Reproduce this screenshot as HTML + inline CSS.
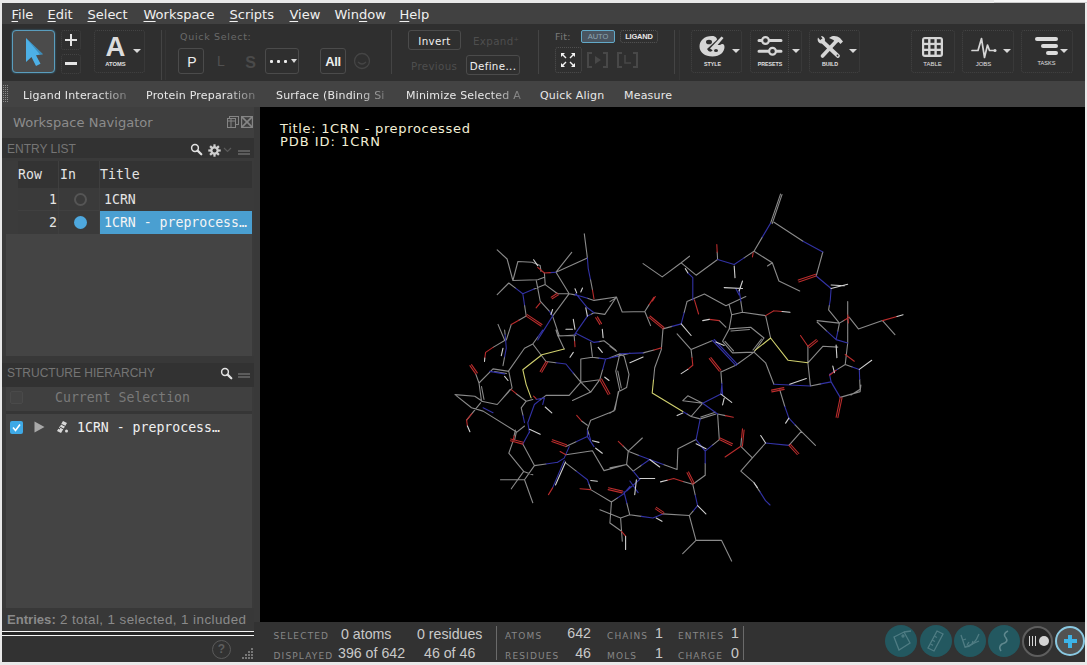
<!DOCTYPE html>
<html lang="en">
<head>
<meta charset="utf-8">
<title>Maestro</title>
<style>
*{box-sizing:border-box;margin:0;padding:0}
html,body{width:1087px;height:665px;overflow:hidden;background:#e9e9e9}
body{position:relative;font-family:"DejaVu Sans","Liberation Sans",sans-serif;color:#e6e6e6;font-size:13px}
.abs{position:absolute}
#win{position:absolute;left:2px;top:3px;width:1083px;height:659px;background:#303030;overflow:hidden}
#pg{position:absolute;left:-2px;top:-3px;width:1087px;height:665px}
#menubar{left:2px;top:3px;width:1083px;height:21px;background:#414141}
#menubar span{position:absolute;top:3px;margin-left:.5px;font-size:13px;line-height:17px;color:#f0f0f0;white-space:nowrap}
#menubar u{text-decoration:underline;text-underline-offset:2px}
#toolbar{left:2px;top:24px;width:1083px;height:57px;background:#2f2f2f}
#favbar{left:2px;top:81px;width:1083px;height:26px;background:#434343}
#favbar span{position:absolute;top:7.5px;font-size:11px;line-height:14px;color:#e8e8e8;white-space:nowrap;letter-spacing:.2px}
.tbtn{position:absolute;border:1px dotted #444;border-radius:3px}
.lbl{position:absolute;font-family:"Liberation Sans",sans-serif;font-size:6px;color:#e0e0e0;text-align:center;letter-spacing:0;white-space:nowrap}
.arr{position:absolute;width:0;height:0;border-left:4px solid transparent;border-right:4px solid transparent;border-top:4px solid #d8d8d8}
.sep{position:absolute;width:1px;background:#444;}
#left{left:2px;top:107px;width:252px;height:555px;background:linear-gradient(#3a3a3a,#3a3a3a) 0 0/252px 524px no-repeat,#323232}
#leftgap{left:254px;top:107px;width:6px;height:515px;background:#393939}
#ws{left:260px;top:107px;width:825px;height:515px;background:#000}
#status{left:254px;top:622px;width:831px;height:40px;background:#323232}
.mono{font-family:"DejaVu Sans Mono","Liberation Mono",monospace;font-size:13.2px !important}
.lib{font-family:"Liberation Sans",sans-serif}
.stl{position:absolute;font-size:9px;line-height:12px;color:#878787;letter-spacing:1.15px;white-space:nowrap}
.stv{position:absolute;font-family:"Liberation Sans",sans-serif;font-size:14.2px;line-height:17px;color:#c9c9c9;white-space:nowrap}
.rb{position:absolute;top:625px;width:32px;height:32px;border-radius:50%;background:#235860}
</style>
</head>
<body>
<div class="abs" style="left:994px;top:0;width:93px;height:3px;background:#f7f7f7;border-bottom:1px solid #cdcdcd"></div>
<div id="menubar" class="abs">
<span style="left:9px"><u>F</u>ile</span>
<span style="left:45px"><u>E</u>dit</span>
<span style="left:85px"><u>S</u>elect</span>
<span style="left:141px"><u>W</u>orkspace</span>
<span style="left:227px"><u>S</u>cripts</span>
<span style="left:287px"><u>V</u>iew</span>
<span style="left:332px">Win<u>d</u>ow</span>
<span style="left:397px"><u>H</u>elp</span>
</div>
<div id="toolbar" class="abs"></div>
<!-- toolbar items (page coords) -->
<div class="abs" style="left:12px;top:30px;width:43px;height:43px;border:1px solid #5a9dbd;border-radius:4px;background:#4b4b4b;box-shadow:0 0 2px #3c7fa0"></div>
<svg class="abs" style="left:12px;top:30px" width="43" height="43" viewBox="0 0 43 43"><path d="M14 8 L14 32 L19.5 27 L24 36 L28.5 33.8 L24 25.2 L31 24.2 Z" fill="#4db0e6"/><path d="M14 8 L31 24.2 L28 24.6 Z" fill="#2f6f95" opacity=".55"/></svg>
<div class="tbtn" style="left:61px;top:30px;width:20px;height:20px"></div>
<div class="abs" style="left:65px;top:39px;width:12px;height:2px;background:#e4e4e4"></div>
<div class="abs" style="left:70px;top:34px;width:2px;height:12px;background:#e4e4e4"></div>
<div class="tbtn" style="left:61px;top:54px;width:20px;height:20px"></div>
<div class="abs" style="left:65px;top:62px;width:12px;height:3px;background:#e4e4e4"></div>
<div class="tbtn" style="left:94px;top:30px;width:51px;height:43px"></div>
<div class="abs lib" style="left:103.5px;top:31.5px;width:24px;height:30px;font-size:27.5px;line-height:30px;font-weight:bold;color:#dcdcdc;text-align:center">A</div>
<div class="arr" style="left:133px;top:49px"></div>
<div class="lbl" style="left:100px;top:60px;width:31px;font-weight:bold;font-size:5.8px;line-height:8px">ATOMS</div>
<div class="sep" style="left:161px;top:30px;height:50px"></div>
<div class="sep" style="left:165px;top:30px;height:50px;background:#363636"></div>
<div class="abs" style="left:180px;top:30px;font-size:9.5px;line-height:13px;color:#6a6a6a;letter-spacing:.7px;white-space:nowrap">Quick Select:</div>
<div class="tbtn" style="left:178px;top:48px;width:26px;height:26px;border:1px solid #4b4b4b"></div>
<div class="abs lib" style="left:179px;top:49px;width:26px;height:26px;line-height:27px;font-size:14px;color:#ededed;text-align:center">P</div>
<div class="abs lib" style="left:208px;top:48px;width:26px;height:26px;line-height:27px;font-size:14px;color:#515151;text-align:center">L</div>
<div class="abs lib" style="left:237.5px;top:48.5px;width:26px;height:26px;line-height:27px;font-size:16px;font-weight:bold;color:#4a4a4a;text-align:center">S</div>
<div class="tbtn" style="left:265px;top:48px;width:34px;height:26px;border:1px solid #4b4b4b"></div>
<div class="abs" style="left:270px;top:60px;width:3px;height:3px;background:#ececec;border-radius:1px"></div>
<div class="abs" style="left:277px;top:60px;width:3px;height:3px;background:#ececec;border-radius:1px"></div>
<div class="abs" style="left:284px;top:60px;width:3px;height:3px;background:#ececec;border-radius:1px"></div>
<div class="arr" style="left:291px;top:59px;border-left-width:3.5px;border-right-width:3.5px"></div>
<div class="tbtn" style="left:320px;top:48px;width:26px;height:26px;border:1px solid #4b4b4b"></div>
<div class="abs lib" style="left:320px;top:48px;width:26px;height:26px;line-height:27px;font-size:13px;font-weight:bold;color:#ededed;text-align:center;letter-spacing:-.3px">All</div>
<svg class="abs" style="left:352px;top:51px" width="20" height="20" viewBox="0 0 20 20"><circle cx="10" cy="10" r="7.5" fill="none" stroke="#454545" stroke-width="1.3"/><path d="M6 11 Q10 15 14 11" fill="none" stroke="#454545" stroke-width="1.2"/></svg>
<div class="sep" style="left:391px;top:30px;height:44px"></div>
<div class="tbtn" style="left:408px;top:30px;width:53px;height:20px;border:1px solid #4b4b4b"></div>
<div class="abs" style="left:408px;top:30px;width:53px;height:20px;line-height:23.5px;font-size:10.3px;color:#f0f0f0;text-align:center;letter-spacing:.35px">Invert</div>
<div class="abs" style="left:473px;top:30px;height:20px;line-height:23.5px;font-size:10.3px;color:#4e4e4e;letter-spacing:.35px;white-space:nowrap">Expand&#x207A;</div>
<div class="abs" style="left:411px;top:55px;height:20px;line-height:23.5px;font-size:10.3px;color:#4e4e4e;letter-spacing:.35px;white-space:nowrap">Previous</div>
<div class="tbtn" style="left:466px;top:55px;width:54px;height:20px;border:1px solid #4b4b4b"></div>
<div class="abs" style="left:466px;top:55px;width:54px;height:20px;line-height:23.5px;font-size:10.3px;color:#f0f0f0;text-align:center;letter-spacing:.35px;white-space:nowrap">Define...</div>
<div class="sep" style="left:538px;top:30px;height:44px"></div>
<div class="abs" style="left:555px;top:30px;font-size:9.5px;line-height:13px;color:#7a7a7a;letter-spacing:.4px;white-space:nowrap">Fit:</div>
<div class="abs" style="left:581px;top:30px;width:34px;height:13px;border:1px solid #62a9c8;border-radius:2px;background:#4a5560"></div>
<div class="abs lib" style="left:581px;top:30px;width:34px;height:13px;line-height:14px;font-size:7.5px;color:#8fa6b4;text-align:center">AUTO</div>
<div class="tbtn" style="left:620px;top:30px;width:38px;height:13px;border-color:#585858"></div>
<div class="abs lib" style="left:620px;top:30px;width:38px;height:13px;line-height:14px;font-size:7.5px;color:#e6e6e6;text-align:center;font-weight:bold;letter-spacing:-.2px">LIGAND</div>
<div class="tbtn" style="left:555px;top:47px;width:27px;height:26px;border-color:#505050"></div>
<svg class="abs" style="left:560px;top:52px" width="16" height="16" viewBox="0 0 16 16" fill="#f4f4f4" stroke="#f4f4f4" stroke-width="1.4"><path d="M2 2 L6 6 M14 2 L10 6 M2 14 L6 10 M14 14 L10 10" fill="none"/><path d="M1 1 L5 1 L1 5 Z M15 1 L11 1 L15 5 Z M1 15 L5 15 L1 11 Z M15 15 L11 15 L15 11 Z" stroke="none"/></svg>
<svg class="abs" style="left:587px;top:52px" width="21" height="16" viewBox="0 0 21 16" fill="none" stroke="#484848" stroke-width="2"><path d="M5 1 H1 V15 H5 M16 1 H20 V15 H16"/><path d="M8 4 L14 8 L8 12 Z" fill="#484848" stroke="none"/></svg>
<svg class="abs" style="left:617px;top:52px" width="21" height="16" viewBox="0 0 21 16" fill="none" stroke="#484848" stroke-width="2"><path d="M5 1 H1 V15 H5 M16 1 H20 V15 H16"/><path d="M8 3 V11 H14" stroke-width="1.5"/></svg>
<div class="sep" style="left:674px;top:30px;height:44px"></div>
<div class="sep" style="left:679px;top:30px;height:50px;background:#363636"></div>
<!-- STYLE -->
<div class="tbtn" style="left:691px;top:30px;width:51px;height:43px"></div>
<svg class="abs" style="left:699px;top:35px" width="27" height="22" viewBox="0 0 27 22"><path d="M13 1 C5 1 0.5 6 0.5 11.5 C0.5 17.5 6 21.5 13.5 21.5 C21 21.5 25.5 17 25.5 12 C25.5 9.5 24 8.5 22 9.5 C19 11 16 9.5 17.5 6.5 C19 3.5 17 1 13 1 Z" fill="#d6d6d6"/><ellipse cx="10" cy="7" rx="3" ry="2.3" fill="#2f2f2f"/><path d="M8 14 L21 2 L23 3.5 L13 16 Q10 18 8 14 Z" fill="#2f2f2f"/><path d="M11 13.5 L22.5 1.5 L24.5 3 L14 15.5 Z" fill="#d6d6d6"/><ellipse cx="17" cy="15.5" rx="2" ry="1.6" fill="#2f2f2f"/></svg>
<div class="arr" style="left:732px;top:49px"></div>
<div class="lbl" style="left:697px;top:60px;width:31px;font-weight:bold;font-size:5.3px;line-height:8px">STYLE</div>
<!-- PRESETS -->
<div class="tbtn" style="left:750px;top:30px;width:52px;height:43px"></div>
<div class="abs" style="left:788px;top:31px;width:0;height:41px;border-left:1px dotted #4a4a4a"></div>
<svg class="abs" style="left:757px;top:35px" width="26" height="22" viewBox="0 0 26 22" fill="none" stroke="#d6d6d6"><path d="M2 5.5 H24 M2 16.3 H24" stroke-width="3" stroke-linecap="round"/><circle cx="8.5" cy="5.5" r="3.4" fill="#2f2f2f" stroke-width="2.2"/><circle cx="15.5" cy="16.3" r="3.4" fill="#2f2f2f" stroke-width="2.2"/></svg>
<div class="arr" style="left:792px;top:49px"></div>
<div class="lbl" style="left:754px;top:60px;width:32px;font-weight:bold;font-size:5.3px;line-height:8px">PRESETS</div>
<!-- BUILD -->
<div class="tbtn" style="left:809px;top:30px;width:51px;height:43px"></div>
<svg class="abs" style="left:816px;top:35px" width="29" height="24" viewBox="0 0 29 24"><g stroke="#d6d6d6" stroke-linecap="round" fill="none"><path d="M6 6 L22 21" stroke-width="3.8"/><path d="M20 6.5 L6.5 21" stroke-width="3.6"/></g><path d="M2 2.5 C1 5 2 8 5 8.5 L8 8 L9 5 C9 2.5 7 1 5 1 L6.5 4 L4.5 5.5 Z" fill="#d6d6d6"/><path d="M13 3 C16 0 21 0.5 24 3 L27 6.5 L24.5 9 L22.5 7 L20 8 L17.5 5 Z" fill="#d6d6d6"/><circle cx="21.5" cy="20.5" r=".9" fill="#2f2f2f"/></svg>
<div class="arr" style="left:849px;top:49px"></div>
<div class="lbl" style="left:814px;top:60px;width:32px;font-weight:bold;font-size:5.3px;line-height:8px">BUILD</div>
<!-- TABLE -->
<div class="tbtn" style="left:911px;top:30px;width:44px;height:43px"></div>
<svg class="abs" style="left:921px;top:36px" width="23" height="22" viewBox="0 0 23 22"><rect x="1" y="1" width="21" height="20" rx="3" fill="#d6d6d6"/><g fill="#2f2f2f"><rect x="3.2" y="3.2" width="3.9" height="3.6"/><rect x="9.5" y="3.2" width="3.9" height="3.6"/><rect x="15.8" y="3.2" width="3.9" height="3.6"/><rect x="3.2" y="9.1" width="3.9" height="3.6"/><rect x="9.5" y="9.1" width="3.9" height="3.6"/><rect x="15.8" y="9.1" width="3.9" height="3.6"/><rect x="3.2" y="15.0" width="3.9" height="3.6"/><rect x="9.5" y="15.0" width="3.9" height="3.6"/><rect x="15.8" y="15.0" width="3.9" height="3.6"/></g></svg>
<div class="lbl" style="left:916px;top:60px;width:33px;font-size:6px;line-height:8px">TABLE</div>
<!-- JOBS -->
<div class="tbtn" style="left:962px;top:30px;width:52px;height:43px"></div>
<svg class="abs" style="left:970.5px;top:37px" width="27" height="22" viewBox="0 0 27 22" fill="none" stroke="#d6d6d6" stroke-width="1.7" stroke-linejoin="round" stroke-linecap="round"><path d="M1 13.5 H7 L10.5 1.5 L13.5 20.5 L16.5 8 L18.5 13.5 H23.5"/><circle cx="24" cy="13.5" r="1.5" fill="#d6d6d6" stroke="none"/></svg>
<div class="arr" style="left:1003px;top:49px"></div>
<div class="lbl" style="left:967px;top:60px;width:33px;font-size:6px;line-height:8px">JOBS</div>
<!-- TASKS -->
<div class="tbtn" style="left:1021px;top:30px;width:52px;height:43px"></div>
<div class="abs" style="left:1035px;top:37px;width:23px;height:4px;border-radius:2px;background:#dcdcdc"></div>
<div class="abs" style="left:1041px;top:44px;width:17px;height:4px;border-radius:2px;background:#dcdcdc"></div>
<div class="abs" style="left:1046px;top:51px;width:12px;height:4px;border-radius:2px;background:#dcdcdc"></div>
<div class="arr" style="left:1060px;top:49px"></div>
<div class="lbl" style="left:1030px;top:59px;width:33px;font-size:5.6px;line-height:8px">TASKS</div>
<div id="favbar" class="abs">
<span style="left:21px;-webkit-mask-image:linear-gradient(90deg,#000 72%,rgba(0,0,0,.3) 100%);mask-image:linear-gradient(90deg,#000 72%,rgba(0,0,0,.3) 100%)">Ligand Interaction</span>
<span style="left:144px;-webkit-mask-image:linear-gradient(90deg,#000 72%,rgba(0,0,0,.3) 100%);mask-image:linear-gradient(90deg,#000 72%,rgba(0,0,0,.3) 100%)">Protein Preparation</span>
<span style="left:274px;-webkit-mask-image:linear-gradient(90deg,#000 72%,rgba(0,0,0,.3) 100%);mask-image:linear-gradient(90deg,#000 72%,rgba(0,0,0,.3) 100%)">Surface (Binding Si</span>
<span style="left:404px;-webkit-mask-image:linear-gradient(90deg,#000 72%,rgba(0,0,0,.3) 100%);mask-image:linear-gradient(90deg,#000 72%,rgba(0,0,0,.3) 100%)">Minimize Selected A</span>
<span style="left:538px">Quick Align</span>
<span style="left:622px">Measure</span>
</div>
<svg class="abs" style="left:2.5px;top:85px" width="6" height="17" viewBox="0 0 6 17" fill="#8c8c8c"><rect x="0" y="0" width="1" height="1"/><rect x="0" y="2" width="1" height="1"/><rect x="0" y="4" width="1" height="1"/><rect x="0" y="6" width="1" height="1"/><rect x="0" y="8" width="1" height="1"/><rect x="0" y="10" width="1" height="1"/><rect x="0" y="12" width="1" height="1"/><rect x="0" y="14" width="1" height="1"/><rect x="0" y="16" width="1" height="1"/><rect x="2" y="0" width="1" height="1"/><rect x="2" y="2" width="1" height="1"/><rect x="2" y="4" width="1" height="1"/><rect x="2" y="6" width="1" height="1"/><rect x="2" y="8" width="1" height="1"/><rect x="2" y="10" width="1" height="1"/><rect x="2" y="12" width="1" height="1"/><rect x="2" y="14" width="1" height="1"/><rect x="2" y="16" width="1" height="1"/><rect x="4" y="0" width="1" height="1"/><rect x="4" y="2" width="1" height="1"/><rect x="4" y="4" width="1" height="1"/><rect x="4" y="6" width="1" height="1"/><rect x="4" y="8" width="1" height="1"/><rect x="4" y="10" width="1" height="1"/><rect x="4" y="12" width="1" height="1"/><rect x="4" y="14" width="1" height="1"/><rect x="4" y="16" width="1" height="1"/></svg>
<div id="left" class="abs"></div>
<!-- Workspace Navigator header -->
<div class="abs" style="left:2px;top:107px;width:252px;height:31px;background:#3f3f3f"></div>
<div class="abs" style="left:13px;top:114px;font-size:13px;line-height:17px;color:#8c8c8c;letter-spacing:.05px;white-space:nowrap">Workspace Navigator</div>
<svg class="abs" style="left:227px;top:116px" width="12" height="12" viewBox="0 0 12 12" fill="none" stroke="#858585" stroke-width="1"><rect x="2.5" y=".5" width="9" height="8"/><rect x=".5" y="2.5" width="8" height="9" fill="#3f3f3f"/><path d="M.5 5 H8.5 M4 2.5 V11.5" /></svg>
<svg class="abs" style="left:241px;top:116px" width="12" height="12" viewBox="0 0 12 12" fill="none" stroke="#858585" stroke-width="1.2"><rect x=".6" y=".6" width="10.8" height="10.8"/><path d="M.6 .6 L11.4 11.4 M11.4 .6 L.6 11.4" stroke-width="1.6"/></svg>
<!-- ENTRY LIST bar -->
<div class="abs" style="left:2px;top:138px;width:252px;height:20px;background:#323232"></div>
<div class="abs" style="left:2px;top:158px;width:252px;height:3px;background:#3a3a3a"></div>
<div class="abs lib" style="left:7px;top:142px;font-size:12px;line-height:15px;color:#757575;white-space:nowrap">ENTRY LIST</div>
<svg class="abs" style="left:190px;top:143px" width="13" height="13" viewBox="0 0 13 13" fill="none" stroke="#e2e2e2"><circle cx="5" cy="5" r="3.4" stroke-width="1.5"/><path d="M7.6 7.6 L11.3 11.3" stroke-width="2.2" stroke-linecap="round"/></svg>
<svg class="abs" style="left:208px;top:144px" width="13" height="13" viewBox="0 0 13 13"><g fill="#d0d0d0"><circle cx="6.5" cy="6.5" r="4.2"/><g id="gt"><rect x="5.4" y="0.3" width="2.2" height="12.4"/></g><rect x="5.4" y="0.3" width="2.2" height="12.4" transform="rotate(45 6.5 6.5)"/><rect x="5.4" y="0.3" width="2.2" height="12.4" transform="rotate(90 6.5 6.5)"/><rect x="5.4" y="0.3" width="2.2" height="12.4" transform="rotate(135 6.5 6.5)"/></g><circle cx="6.5" cy="6.5" r="2" fill="#323232"/></svg>
<svg class="abs" style="left:223px;top:147px" width="9" height="6" viewBox="0 0 9 6" fill="none" stroke="#5a5a5a" stroke-width="1.2"><path d="M1 1 L4.5 4.5 L8 1"/></svg>
<div class="abs" style="left:238px;top:150px;width:12px;height:5px;border-top:2px solid #5c5c5c;border-bottom:2px solid #5c5c5c"></div>
<!-- entry table -->
<div class="abs" style="left:6px;top:161px;width:246px;height:195px;background:#444"></div>
<div class="abs" style="left:6px;top:161px;width:12px;height:73px;background:#3b3b3b"></div>
<div class="abs" style="left:18px;top:161px;width:234px;height:27px;background:#333"></div>
<div class="abs" style="left:18px;top:188px;width:82px;height:46px;background:#3a3a3a"></div>
<div class="abs" style="left:18px;top:188px;width:234px;height:23px;background:#3a3a3a"></div>
<div class="abs" style="left:58px;top:161px;width:1px;height:73px;background:#3f3f3f"></div>
<div class="abs" style="left:99px;top:161px;width:1px;height:73px;background:#3f3f3f"></div>
<div class="abs" style="left:18px;top:210px;width:82px;height:1px;background:#404040"></div>
<div class="abs mono" style="left:18px;top:166px;font-size:13px;line-height:17px;color:#e4e4e4;white-space:pre">Row</div>
<div class="abs mono" style="left:60px;top:166px;font-size:13px;line-height:17px;color:#e4e4e4;white-space:pre">In</div>
<div class="abs mono" style="left:100px;top:166px;font-size:13px;line-height:17px;color:#e4e4e4;white-space:pre">Title</div>
<div class="abs mono" style="left:18px;top:191px;width:39px;text-align:right;font-size:13px;line-height:17px;color:#e4e4e4">1</div>
<div class="abs mono" style="left:18px;top:214px;width:39px;text-align:right;font-size:13px;line-height:17px;color:#e4e4e4">2</div>
<div class="abs" style="left:74px;top:193px;width:13px;height:13px;border:2px solid #555;border-radius:50%"></div>
<div class="abs" style="left:74px;top:216px;width:13px;height:13px;background:#4ea8de;border-radius:50%"></div>
<div class="abs mono" style="left:104px;top:191px;font-size:13px;line-height:17px;color:#e4e4e4;white-space:pre">1CRN</div>
<div class="abs" style="left:100px;top:211px;width:152px;height:23px;background:#4a9fd1"></div>
<div class="abs mono" style="left:104px;top:214px;font-size:13px;line-height:17px;color:#f4f4f4;white-space:pre">1CRN - preprocess…</div>
<!-- STRUCTURE HIERARCHY -->
<div class="abs" style="left:2px;top:356px;width:252px;height:7px;background:#383838"></div>
<div class="abs" style="left:2px;top:363px;width:252px;height:24px;background:#323232"></div>
<div class="abs lib" style="left:7px;top:366px;font-size:12px;line-height:15px;color:#757575;white-space:nowrap">STRUCTURE HIERARCHY</div>
<svg class="abs" style="left:220px;top:367px" width="13" height="13" viewBox="0 0 13 13" fill="none" stroke="#e2e2e2"><circle cx="5" cy="5" r="3.4" stroke-width="1.5"/><path d="M7.6 7.6 L11.3 11.3" stroke-width="2.2" stroke-linecap="round"/></svg>
<div class="abs" style="left:238px;top:373px;width:12px;height:5px;border-top:2px solid #5c5c5c;border-bottom:2px solid #5c5c5c"></div>
<div class="abs" style="left:6px;top:387px;width:246px;height:24px;background:#404040"></div>
<div class="abs" style="left:6px;top:411px;width:246px;height:3px;background:#363636"></div>
<div class="abs" style="left:6px;top:414px;width:246px;height:194px;background:#444"></div>
<div class="abs" style="left:10px;top:391px;width:13px;height:13px;border:1px solid #4a4a4a;border-radius:2px;background:#434343"></div>
<div class="abs mono" style="left:55px;top:389px;font-size:13px;line-height:17px;color:#7a7a7a;white-space:pre">Current Selection</div>
<div class="abs" style="left:10px;top:421px;width:13px;height:13px;border-radius:2px;background:#3ea9e6"></div>
<svg class="abs" style="left:10px;top:421px" width="13" height="13" viewBox="0 0 13 13" fill="none" stroke="#fff" stroke-width="1.6"><path d="M3 6.5 L5.5 9.5 L10 3.5"/></svg>
<svg class="abs" style="left:34px;top:421px" width="11" height="12" viewBox="0 0 11 12"><path d="M0.5 0.5 L10.5 6 L0.5 11.5 Z" fill="#a9a9a9"/></svg>
<svg class="abs" style="left:56px;top:420px" width="13" height="14" viewBox="0 0 13 14" fill="#d8d8d8"><path d="M7 1 L11 3 L5 13 L1 11 Z"/><circle cx="10.5" cy="11" r="1.5"/><path d="M3 4 L5 5 M2 8 L4 9" stroke="#444" stroke-width="1.2"/><path d="M5.2 4.2 L9.5 6.4 M3.8 7 L8 9.2" stroke="#444" stroke-width="1"/></svg>
<div class="abs mono" style="left:77px;top:419px;font-size:13px;line-height:17px;color:#f0f0f0;white-space:pre">1CRN - preprocess…</div>
<!-- footer -->
<div class="abs" style="left:2px;top:608px;width:252px;height:23px;background:#383838"></div>
<div class="abs lib" style="left:7px;top:612px;font-size:13.4px;line-height:15px;color:#8a8a8a;white-space:nowrap;letter-spacing:.42px"><b style="letter-spacing:0;font-size:13.1px">Entries:</b> 2 total, 1 selected, 1 included</div>
<div class="abs" style="left:2px;top:631px;width:252px;height:1px;background:#f4f4f4"></div>
<div class="abs" style="left:2px;top:632px;width:252px;height:3px;background:#262626"></div>
<div class="abs" style="left:2px;top:635px;width:252px;height:1px;background:#f4f4f4"></div>
<div class="abs" style="left:212px;top:640px;width:19px;height:19px;border:1.3px solid #5a5a5a;border-radius:50%"></div>
<div class="abs lib" style="left:212px;top:640px;width:19px;height:19px;line-height:19px;font-size:12px;font-weight:bold;color:#5e5e5e;text-align:center">?</div>
<svg class="abs" style="left:242px;top:648px" width="12" height="12" viewBox="0 0 12 12" fill="#777"><rect x="9" y="0" width="2" height="2"/><rect x="6" y="3" width="2" height="2"/><rect x="9" y="3" width="2" height="2"/><rect x="3" y="6" width="2" height="2"/><rect x="6" y="6" width="2" height="2"/><rect x="9" y="6" width="2" height="2"/><rect x="0" y="9" width="2" height="2"/><rect x="3" y="9" width="2" height="2"/><rect x="6" y="9" width="2" height="2"/><rect x="9" y="9" width="2" height="2"/></svg>
<div id="leftgap" class="abs"></div>
<div id="ws" class="abs"></div>
<div class="abs" style="left:280px;top:121.9px;font-size:13px;line-height:13px;color:#f2efd6;white-space:nowrap;letter-spacing:.68px">Title: 1CRN - preprocessed<br><span style="letter-spacing:.96px">PDB ID: 1CRN</span></div>
<!--MOLS-->
<svg class="abs" style="left:260px;top:107px;filter:blur(.4px)" width="825" height="515" viewBox="260 107 825 515" fill="none" stroke-width="1.1" stroke-linecap="round" stroke-linejoin="round">
<path stroke="#8a8a8a" d="M497.2 249.9 L507.1 259.0 L512.9 280.5 L517.9 261.5 L532.0 262.3 L540.2 265.6 L541.0 271.4 M556.0 272.2 L571.7 252.4 M556.0 272.2 L587.4 258.1 L584.3 233.9 M590.4 279.2 L592.5 290.0 M512.9 280.5 L537.7 279.7 L544.4 277.2 M508.8 283.0 L497.2 294.6 M508.8 283.0 L515.8 288.4 M534.0 289.1 L545.2 284.6 M545.2 284.6 L544.4 273.0 M545.2 284.6 L557.6 293.7 L569.2 293.7 M556.0 272.2 L569.2 293.7 L552.6 316.1 M569.2 293.7 L575.0 294.9 M587.4 298.3 L594.0 300.4 M594.0 300.4 L616.4 297.0 L622.2 312.0 L644.8 311.5 M616.4 297.0 L604.8 314.4 L594.0 312.8 M594.0 312.8 L590.7 314.5 M524.5 304.9 L526.2 316.1 M536.1 279.7 L540.2 301.2 L549.3 311.1 M526.2 316.1 L518.8 320.2 M552.6 316.1 L559.3 336.0 L575.8 335.1 M498.0 324.4 L504.6 340.0 M511.3 324.4 L506.3 340.0 M504.6 330.0 L505.1 334.5 M504.6 356.9 L503.0 365.6 M505.5 340.0 L493.0 347.4 M479.0 383.0 L493.0 368.9 L508.8 371.4 L512.1 388.0 L497.2 404.5 L481.5 401.2 L479.0 383.0 M481.5 386.5 L484.0 399.5 M499.5 402.0 L510.0 389.5 M494.5 371.5 L506.5 373.5 M475.7 373.9 L479.0 383.0 M508.8 370.6 L524.5 348.2 L532.8 344.0 M532.8 344.0 L537.8 337.0 M532.8 344.0 L546.0 361.5 M546.0 361.5 L556.0 362.8 M573.3 373.1 L580.8 382.2 M564.2 349.0 L557.6 335.0 L556.0 330.0 M557.6 335.8 L574.2 335.8 M574.2 335.8 L574.6 341.2 M599.0 341.6 L604.0 340.8 M604.0 340.8 L615.6 349.9 M590.7 342.4 L592.4 356.5 M580.8 359.0 L592.4 357.3 M592.4 357.3 L599.0 358.1 M617.8 356.1 L630.0 353.2 M580.8 359.0 L580.8 382.2 M602.7 369.4 L599.8 379.7 M580.8 382.2 L599.8 379.7 M580.8 382.2 L590.7 392.1 L599.8 379.7 M590.7 392.1 L572.5 400.4 M580.8 382.2 L569.2 395.4 L546.0 395.4 M546.0 395.4 L540.2 399.9 M516.2 393.7 L526.2 401.2 L532.8 399.5 M526.2 401.2 L521.2 407.8 M521.2 407.8 L522.9 415.2 M524.5 426.0 L516.2 432.6 L514.6 440.0 M455.0 394.6 L474.8 396.2 L482.3 401.2 M455.0 394.6 L471.5 407.8 L483.1 411.1 M480.6 402.8 L466.6 420.2 M483.1 411.1 L516.2 431.8 M618.9 391.3 L613.9 411.1 L590.7 420.2 L587.4 429.3 M587.4 429.3 L589.0 434.6 M581.6 421.0 L587.4 425.2 M515.4 430.0 L514.1 435.8 M512.9 441.6 L508.8 453.2 L523.7 471.4 M522.8 444.1 L534.4 465.6 M534.4 465.6 L546.0 464.0 M534.4 465.6 L524.5 479.7 L500.5 479.7 M524.5 479.7 L532.8 502.8 M532.8 474.7 L523.7 471.4 L511.3 488.8 M565.9 446.6 L576.6 441.6 M565.9 454.8 L592.4 450.7 L604.0 470.6 L625.5 464.8 M565.9 463.1 L576.6 471.4 M589.0 484.2 L590.7 488.8 M590.7 489.6 L611.4 502.0 M611.4 502.0 L617.6 497.9 M643.1 263.6 L662.2 276.9 L681.2 262.8 L689.5 256.2 M681.2 262.8 L696.1 275.2 L717.6 259.5 M717.6 259.5 L717.2 252.1 M744.1 257.9 L754.0 251.2 M754.0 251.2 L762.3 237.1 M770.6 223.1 L780.5 194.1 M772.2 223.6 L782.0 194.6 M754.0 251.2 L772.3 262.8 L778.9 281.0 L799.7 291.0 M772.3 262.8 L767.5 266.0 M774.0 222.3 L803.0 241.3 M822.8 252.0 L816.2 276.0 M610.0 301.6 L616.6 297.4 M644.8 311.5 L649.3 304.4 M644.8 311.5 L650.6 325.6 M663.0 328.9 L672.1 326.4 M684.1 312.8 L687.0 301.6 M687.0 301.6 L704.4 294.1 L725.9 305.7 L745.8 296.6 M663.0 328.9 L661.3 349.6 L654.7 367.8 L653.5 380.0 M654.0 350.0 L643.1 352.9 M619.9 353.7 L610.0 357.8 M610.0 346.3 L616.6 351.2 M619.9 353.7 L615.8 371.1 L619.9 391.0 L626.6 387.6 L629.0 374.4 L624.1 356.2 L619.9 353.7 M617.8 371.0 L621.3 388.0 M677.1 333.8 L691.1 349.6 L712.6 340.5 M691.1 349.6 L692.0 357.5 M729.2 328.9 L750.7 327.2 L764.0 338.0 L754.0 352.1 L732.5 352.9 L722.6 341.3 L729.2 328.9 M731.0 331.0 L749.5 329.5 M761.5 339.0 L753.0 350.0 M733.5 350.8 L725.0 341.3 M729.2 328.9 L731.7 314.8 L729.2 304.9 M731.7 314.8 L742.5 312.3 L765.6 315.6 M742.5 312.3 L740.8 301.1 M765.6 315.6 L770.6 338.0 M719.3 320.6 L725.9 327.2 M754.0 352.1 L735.8 365.3 L720.9 371.9 M720.9 371.9 L721.8 383.4 M754.0 352.1 L765.6 362.8 L773.9 384.3 M829.4 305.0 L828.6 309.8 L839.4 323.1 M807.9 362.8 L807.9 346.3 M807.9 362.8 L822.8 346.3 L837.7 347.1 M807.9 362.8 L810.4 386.0 M810.4 386.0 L820.8 383.9 M837.4 369.4 L845.2 364.5 M845.2 364.5 L852.2 366.9 M859.7 379.4 L860.1 389.3 M860.1 389.3 L851.0 395.0 M845.2 364.5 L847.7 343.0 L847.7 301.6 M839.4 323.1 L817.1 320.6 M817.1 322.0 L826.6 330.8 M839.4 323.1 L837.8 331.4 M839.4 323.1 L844.3 320.2 M849.3 317.3 L858.4 328.9 L882.5 320.6 M882.5 320.6 L894.9 334.7 M687.0 414.0 L691.1 416.5 M691.1 416.5 L702.7 403.2 M682.8 400.7 L687.8 395.8 L702.7 403.2 L682.8 400.7 M717.6 414.0 L725.5 415.6 M691.1 416.5 L700.2 418.9 L716.0 414.0 M700.8 417.0 L715.4 412.2 M717.6 414.0 L719.3 439.6 M719.3 439.6 L712.2 445.4 M696.1 439.6 L677.9 448.7 L677.1 469.4 M677.1 469.4 L663.4 464.4 M705.2 463.2 L705.2 475.2 M705.2 475.2 L692.8 484.3 M692.8 484.3 L683.0 481.5 M692.8 484.3 L695.2 495.0 M639.0 455.4 L628.2 451.2 M628.2 451.2 L623.2 446.2 M628.2 451.2 L642.3 438.0 M628.2 451.2 L626.6 464.5 L610.0 467.8 M641.5 465.3 L633.2 471.1 M633.2 471.1 L626.6 464.5 M740.8 446.3 L752.4 457.8 L765.6 443.0 M740.8 446.3 L741.6 437.6 M752.4 457.8 L740.8 471.1 L754.0 482.7 M754.0 482.7 L759.8 491.6 M779.8 390.0 L784.8 406.5 M610.0 413.1 L615.0 409.8 L618.3 391.6 M795.1 424.8 L801.3 431.4 M801.3 431.4 L815.4 445.4 M801.3 431.4 L788.9 445.4 M840.2 397.4 L860.1 391.6 L860.9 385.0 M705.2 475.2 L704.2 475.8 M693.5 510.6 L689.3 515.5 M689.3 515.5 L662.8 513.9 M641.3 516.4 L629.7 514.7 M689.3 515.5 L696.0 540.4 L721.6 540.4 L731.6 561.1 M696.0 540.4 L682.7 553.6 M629.7 514.7 L626.8 503.1 M629.7 514.7 L620.6 518.0 L599.9 509.7 M620.6 518.0 L622.3 541.2 M611.5 501.5 L609.9 523.0 L621.5 531.3"/>
<path stroke="#3232a4" d="M550.2 272.6 L556.0 272.2 M587.4 258.1 L588.2 268.4 M588.2 268.4 L590.4 279.2 M515.8 288.4 L522.8 293.7 M522.8 293.7 L534.0 289.1 M575.0 294.9 L580.8 296.2 M580.8 296.2 L587.4 298.3 M590.7 314.5 L587.4 316.1 M575.8 293.7 L587.4 307.8 L594.0 312.8 M522.8 293.7 L524.5 304.9 M549.3 311.1 L552.6 316.1 M552.6 316.1 L537.7 340.0 M587.4 316.1 L574.2 335.1 M505.1 334.5 L505.5 339.0 M505.5 339.0 L506.3 348.2 M506.3 348.2 L504.6 356.9 M489.7 371.4 L504.6 373.9 M537.8 337.0 L542.7 330.0 M556.0 362.8 L565.9 364.0 M565.9 364.0 L573.3 373.1 M575.8 333.3 L594.0 342.4 M594.0 342.4 L599.0 341.6 M599.0 358.1 L605.6 359.0 M605.6 359.0 L617.8 356.1 M605.6 359.0 L602.7 369.4 M540.2 399.9 L534.4 404.5 M536.1 399.5 L544.4 397.9 L542.7 404.5 M522.9 415.2 L524.5 422.7 M534.4 404.5 L527.8 422.7 L529.5 432.6 M483.1 407.8 L493.0 412.8 M589.0 434.6 L590.7 440.0 M522.8 444.1 L529.5 431.7 M546.0 464.0 L557.6 462.3 M557.6 462.3 L564.2 458.1 L569.2 446.6 M576.6 441.6 L587.4 436.6 M587.4 430.0 L587.4 436.6 L594.0 446.6 M564.2 460.6 L552.6 487.9 M576.6 471.4 L587.4 479.7 M587.4 479.7 L589.0 484.2 M617.6 497.9 L623.8 493.7 M623.8 493.7 L630.0 486.3 M717.6 259.5 L734.2 264.5 M734.2 264.5 L744.1 257.9 M762.3 237.1 L770.6 223.1 M687.8 272.8 L692.8 277.7 L692.8 299.9 M735.8 288.5 L739.1 295.0 M803.0 241.3 L822.8 252.0 M816.2 276.0 L831.1 288.5 M831.1 288.5 L830.3 299.9 M672.1 326.4 L681.2 323.9 M681.2 323.9 L684.1 312.8 M643.1 352.9 L619.9 353.7 M712.6 340.5 L735.8 365.3 M714.2 339.5 L737.4 364.3 M740.8 301.1 L739.1 290.0 M721.8 383.4 L722.6 395.0 M773.9 384.3 L810.4 386.0 M830.3 299.9 L829.4 305.0 M820.8 383.9 L831.1 381.9 M831.1 381.9 L829.5 374.4 M829.5 374.4 L837.4 369.4 M852.2 366.9 L859.3 369.4 M859.3 369.4 L859.7 379.4 M831.1 381.9 L840.2 397.4 M826.6 330.8 L836.1 339.6 M836.1 339.6 L847.7 343.0 M837.8 331.4 L836.1 339.6 M682.8 411.5 L687.0 414.0 M702.7 403.2 L720.9 394.1 L721.8 385.0 M702.7 403.2 L717.6 414.0 M700.2 418.9 L696.1 439.6 M712.2 445.4 L705.2 451.2 M696.1 439.6 L705.2 451.2 M663.4 464.4 L649.7 459.5 M705.2 451.2 L705.2 463.2 M695.2 495.0 L697.6 505.6 M649.7 459.5 L639.0 455.4 M649.7 459.5 L641.5 465.3 M633.2 471.1 L639.8 479.4 L626.6 491.0 M629.9 481.0 L638.1 492.6 M765.6 443.0 L788.9 445.4 M759.8 491.6 L765.5 500.6 M784.8 406.5 L788.9 418.1 M788.9 418.1 L795.1 424.8 M832.8 385.0 L840.2 397.4 M765.5 500.6 L770.0 505.0 M697.6 505.6 L693.5 510.6 M662.8 513.9 L652.9 518.0 M652.9 518.0 L641.3 516.4 M626.8 503.1 L623.9 491.5"/>
<path stroke="#b82c2c" d="M537.7 267.3 L544.4 273.0 M544.4 273.0 L550.2 272.6 M592.5 290.0 L594.0 299.0 M552.2 298.7 L558.4 294.9 M551.2 297.2 L557.2 293.2 M595.7 317.7 L599.8 324.4 M597.4 316.9 L601.5 323.6 M536.1 307.8 L540.2 302.8 M518.8 320.2 L511.3 324.4 M526.2 316.1 L541.0 326.0 M527.2 314.6 L542.0 324.5 M493.0 347.4 L485.6 352.4 L484.8 358.0 M469.9 365.6 L475.7 373.9 M471.5 364.6 L477.3 372.9 M546.0 361.5 L540.2 371.4 M547.6 362.3 L541.8 372.2 M574.6 341.2 L575.0 346.6 M599.8 379.7 L608.1 394.6 M601.6 378.9 L609.9 393.8 M511.3 389.6 L516.2 393.7 M533.6 396.2 L536.1 398.7 M472.0 413.5 L466.6 420.2 L467.4 426.0 M576.7 415.3 L581.6 421.0 M514.1 435.8 L512.9 441.6 M510.4 440.8 L522.8 444.1 M510.8 439.0 L523.2 442.3 M551.8 441.6 L565.9 446.6 M552.4 439.8 L566.5 444.8 M560.1 451.5 L565.9 454.8 M552.6 487.9 L548.5 494.6 M580.0 488.8 L590.7 489.6 M608.1 489.6 L622.2 492.9 M608.5 487.8 L622.6 491.1 M717.2 252.1 L716.8 244.6 M753.2 252.9 L752.4 257.0 M816.2 276.0 L798.8 281.9 M815.6 274.2 L798.2 280.1 M649.3 304.4 L653.9 297.4 M652.5 301.0 L655.3 296.5 M648.9 317.3 L663.0 328.9 M650.0 316.0 L664.0 327.5 M694.4 299.9 L698.6 314.0 M661.3 347.9 L654.0 350.0 M692.0 357.5 L692.8 365.3 M692.8 365.3 L687.8 369.4 M765.6 315.6 L773.9 310.7 M773.9 310.7 L782.0 311.5 M709.3 319.4 L719.3 320.6 M709.3 358.7 L719.3 371.1 M710.9 357.7 L720.9 370.1 M771.4 390.1 L783.8 387.6 M771.8 391.9 L784.2 389.4 M807.9 346.3 L800.5 335.5 M807.9 346.3 L816.2 339.6 M809.3 347.6 L817.6 340.9 M829.5 375.2 L836.1 370.3 M847.7 315.0 L848.4 323.0 M845.2 354.5 L854.3 361.2 M844.3 320.2 L849.3 317.3 M882.5 320.6 L897.0 316.5 M725.5 415.6 L733.3 417.3 M719.3 439.6 L731.7 445.4 M720.1 437.9 L732.5 443.7 M687.0 472.7 L692.8 484.3 M688.6 471.9 L694.4 483.5 M683.0 481.5 L673.7 478.5 M673.7 478.5 L667.1 480.2 M623.2 446.2 L618.3 441.3 M741.6 437.6 L742.5 428.9 M742.4 446.3 L744.1 430.0 M740.8 446.3 L725.1 457.0 M788.9 445.4 L797.2 454.5 M790.5 444.4 L798.8 453.5 M840.2 397.4 L836.1 417.3 M842.0 397.8 L837.9 417.7 M662.8 513.9 L655.4 508.9 M663.8 512.4 L656.4 507.4 M621.5 531.3 L625.6 536.2"/>
<path stroke="#d0d06e" d="M564.2 349.0 L541.9 354.8 L522.8 369.7 L526.2 384.6 L531.1 397.9 M653.5 380.0 L652.2 393.0 L682.8 411.5 M755.0 350.4 L770.6 338.0 L788.1 360.3 L807.9 362.8"/>
<path stroke="#cfcfcf" d="M533.6 259.8 L537.7 265.6 M575.0 288.8 L576.7 292.9 M582.5 288.0 L580.8 292.0 M552.6 309.5 L551.0 314.4 M587.4 316.1 L585.8 307.8 M573.3 319.4 L575.0 329.3 M565.9 329.3 L572.5 329.3 M602.3 329.3 L603.1 337.6 M484.8 358.0 L484.5 361.5 M503.0 348.2 L501.3 355.7 M504.6 376.4 L508.0 380.5 M570.0 357.3 L573.3 352.4 M598.2 347.4 L602.3 352.4 M604.8 377.2 L609.0 380.5 M545.2 407.0 L551.8 412.8 M529.5 429.3 L540.2 434.3 M467.4 426.0 L469.9 431.8 M592.4 440.8 L599.0 442.4 M595.7 448.2 L602.3 453.2 M565.6 462.0 L555.5 485.0 M590.7 480.5 L597.4 481.3 M734.2 266.1 L735.0 277.7 M685.3 268.6 L687.8 272.8 M724.2 287.6 L742.5 288.5 M742.5 281.0 L739.1 291.0 M831.1 288.5 L847.7 284.3 M681.2 323.9 L691.1 335.5 M643.1 357.0 L629.9 362.8 M687.8 369.4 L681.2 373.6 M715.9 342.1 L724.2 345.4 M782.0 311.5 L790.0 312.3 M702.7 320.6 L709.3 319.4 M831.1 285.0 L844.4 285.8 M806.3 378.5 L789.7 384.3 M832.8 366.1 L834.4 372.7 M859.3 369.4 L871.7 360.3 M836.1 345.0 L836.9 357.8 M897.0 316.5 L903.1 314.8 M677.1 415.6 L682.8 413.1 M720.9 394.1 L731.7 402.4 M724.2 398.2 L722.6 404.9 M696.1 443.8 L706.0 448.7 M667.1 480.2 L660.5 481.9 M649.7 459.5 L659.7 467.0 M639.8 478.5 L654.7 478.5 M765.6 443.0 L760.7 435.5 M754.0 482.7 L757.4 487.6 M788.9 418.1 L785.6 423.1 M697.6 505.6 L705.9 513.9 M656.2 518.0 L662.0 521.3 M625.6 536.2 L625.6 549.5 M636.4 479.9 L634.7 494.8"/>
</svg>
<!--MOLE-->
<div id="status" class="abs"></div>
<div class="stl" style="left:273.5px;top:630px">SELECTED</div>
<div class="stl" style="left:273.5px;top:650px">DISPLAYED</div>
<div class="stv" style="left:341px;top:625.5px">0 atoms</div>
<div class="stv" style="left:417px;top:625.5px">0 residues</div>
<div class="stv" style="left:338px;top:645px">396 of 642</div>
<div class="stv" style="left:424px;top:645px">46 of 46</div>
<div class="abs" style="left:496px;top:626px;width:1px;height:34px;background:#6a6a6a"></div>
<div class="stl" style="left:505px;top:630px">ATOMS</div>
<div class="stl" style="left:505px;top:650px">RESIDUES</div>
<div class="stv" style="left:540px;top:625px;width:51px;text-align:right">642</div>
<div class="stv" style="left:540px;top:645px;width:51px;text-align:right">46</div>
<div class="stl" style="left:607px;top:630px">CHAINS</div>
<div class="stl" style="left:607px;top:650px">MOLS</div>
<div class="stv" style="left:640px;top:625px;width:23px;text-align:right">1</div>
<div class="stv" style="left:640px;top:645px;width:23px;text-align:right">1</div>
<div class="stl" style="left:678px;top:630px">ENTRIES</div>
<div class="stl" style="left:678px;top:650px">CHARGE</div>
<div class="stv" style="left:716px;top:625px;width:23px;text-align:right">1</div>
<div class="stv" style="left:716px;top:645px;width:23px;text-align:right">0</div>
<div class="abs" style="left:743px;top:626px;width:1px;height:34px;background:#6a6a6a"></div>
<!-- round buttons -->
<div class="rb" style="left:885px"></div>
<div class="rb" style="left:920px"></div>
<div class="rb" style="left:954px"></div>
<div class="rb" style="left:988px"></div>
<svg class="abs" style="left:885px;top:625px" width="32" height="32" viewBox="0 0 32 32" fill="none" stroke="#4f7c83" stroke-width="1.3"><path d="M9 12 L19 7 L25 18 L14 25 Z"/><path d="M19 7 L26 6" /><circle cx="18" cy="11" r="1"/></svg>
<svg class="abs" style="left:920px;top:625px" width="32" height="32" viewBox="0 0 32 32" fill="none" stroke="#4f7c83" stroke-width="1.3"><path d="M17 6 L23 9 L14 26 L8 23 Z"/><path d="M14 11 L17 12.5 M12 15 L15 16.5 M10.5 19 L13 20.3"/></svg>
<svg class="abs" style="left:954px;top:625px" width="32" height="32" viewBox="0 0 32 32" fill="none" stroke="#4f7c83" stroke-width="1.3"><path d="M7 10 L11 22 L25 16"/><path d="M11 22 Q20 22 25 9"/><path d="M9 15 L12 14 M13 20 L15 17 M18 19 L19 16"/></svg>
<svg class="abs" style="left:988px;top:625px" width="32" height="32" viewBox="0 0 32 32" fill="none" stroke="#5f888e" stroke-width="1.6"><path d="M20 6 Q14 9 18 13 Q21 17 14 19 Q10 22 13 26"/></svg>
<div class="abs" style="left:1022px;top:626px;width:31px;height:31px;border-radius:50%;border:2px solid #5e5e5e;background:#262626"></div>
<div class="abs" style="left:1029px;top:636px;width:1px;height:10px;background:#d8d8d8"></div>
<div class="abs" style="left:1032px;top:636px;width:1px;height:10px;background:#d8d8d8"></div>
<div class="abs" style="left:1035px;top:636px;width:1px;height:10px;background:#d8d8d8"></div>
<div class="abs" style="left:1039px;top:636px;width:10px;height:10px;border-radius:50%;background:#d4d4d4"></div>
<div class="abs" style="left:1055px;top:626px;width:30px;height:30px;border-radius:50%;border:2px solid #8ac9e2;background:#525252"></div>
<div class="abs" style="left:1063.5px;top:639px;width:13px;height:4px;background:#3db4e8"></div>
<div class="abs" style="left:1068px;top:634.5px;width:4px;height:13px;background:#3db4e8"></div>
</body>
</html>
